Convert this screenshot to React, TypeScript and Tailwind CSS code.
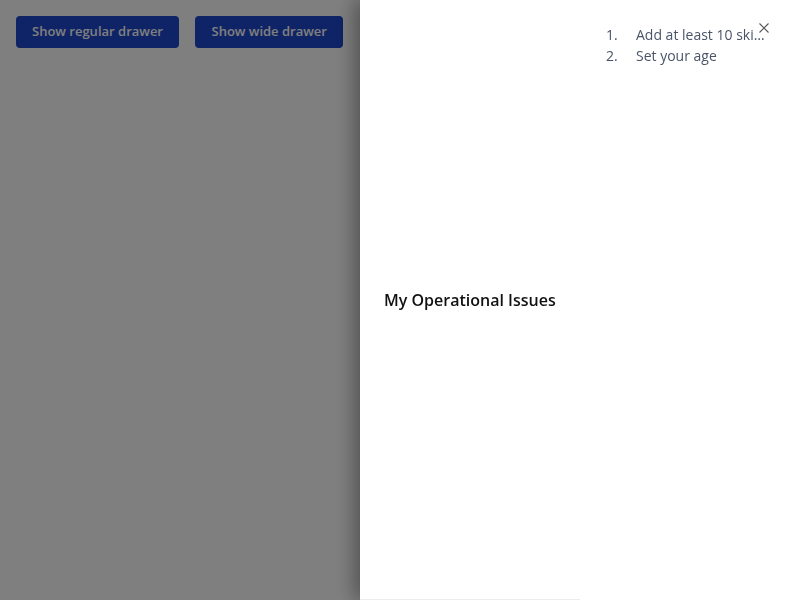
import React from "react";

export default function App() {
  return (
    <div className="relative w-full h-[600px] overflow-hidden bg-white font-['Open_Sans',sans-serif]">
      <div className="flex gap-4 p-4">
        <button className="h-8 px-4 rounded bg-[#1e48cc] text-white text-[13px] font-semibold">
          Show regular drawer
        </button>
        <button className="h-8 px-[16.5px] rounded bg-[#1e48cc] text-white text-[13px] font-semibold">
          Show wide drawer
        </button>
      </div>

      <div className="fixed inset-0 bg-black/50" />

      <div className="fixed top-0 right-0 h-full w-[440px] bg-white shadow-[-6px_0_18px_rgba(0,0,0,0.35)] flex flex-col">
        <div className="flex justify-end pt-6 pr-[35px]">
          <ol className="w-[159px] text-sm leading-[21px] text-[#4a5468]">
            <li className="flex whitespace-nowrap">
              <span className="w-[30px] shrink-0">1.</span>
              <span className="min-w-0 truncate">Add at least 10 skills</span>
            </li>
            <li className="flex whitespace-nowrap">
              <span className="w-[30px] shrink-0">2.</span>
              <span className="min-w-0 truncate">Set your age</span>
            </li>
          </ol>
        </div>
        <button className="absolute top-[18px] right-[26px] w-5 h-5 flex items-center justify-center text-[#555] bg-white/60">
          <svg width="10" height="10" viewBox="0 0 10 10" fill="none" stroke="currentColor" strokeWidth="1.1">
            <path d="M0.5 0.5L9.5 9.5M9.5 0.5L0.5 9.5" />
          </svg>
        </button>
        <h2 className="mt-[222px] px-6 text-base leading-6 font-semibold text-[#111]">My Operational Issues</h2>
        <div className="mt-auto w-[220px] h-px bg-[#ececec]" />
      </div>
    </div>
  );
}
